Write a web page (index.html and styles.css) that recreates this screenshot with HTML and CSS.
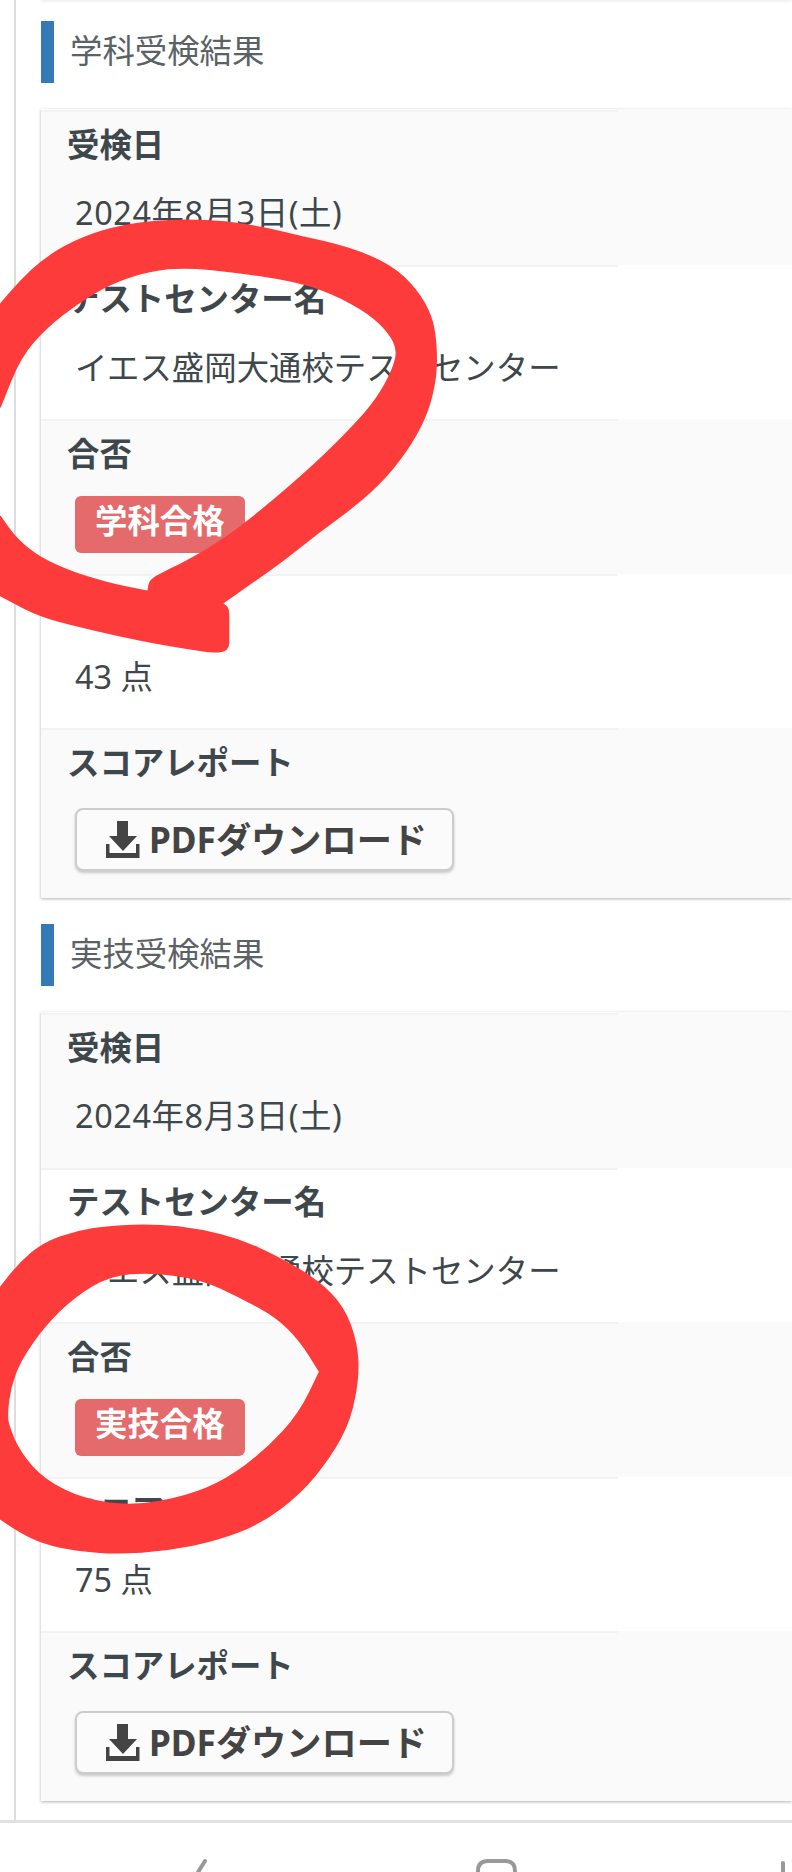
FILE: index.html
```html
<!DOCTYPE html>
<html lang="ja">
<head>
<meta charset="utf-8">
<title>受検結果</title>
<link rel="stylesheet" href="styles.css">
</head>
<body>
<div class="main">
  <div class="prevCard"></div>

  <h3 class="heading">学科受検結果</h3>
  <div class="card">
    <div class="row">
      <div class="label">受検日</div>
      <div class="value date">2024年8月3日(土)</div>
    </div>
    <div class="row">
      <div class="label">テストセンター名</div>
      <div class="value">イエス盛岡大通校テストセンター</div>
    </div>
    <div class="row">
      <div class="label">合否</div>
      <div class="value valueBadge"><span class="badge">学科合格</span></div>
    </div>
    <div class="row">
      <div class="label">スコア</div>
      <div class="value">43 点</div>
    </div>
    <div class="row">
      <div class="label">スコアレポート</div>
      <div class="value valueButton">
        <a href="#" class="pdfButton">
          <svg class="dlIcon" viewBox="0 0 34 37"><path d="M11 0H22V15H31L17 30L3 15H11Z"/><path d="M0 23H3.5V32H30V23H33.5V37H0Z"/></svg>
          PDFダウンロード
        </a>
      </div>
    </div>
  </div>

  <h3 class="heading">実技受検結果</h3>
  <div class="card">
    <div class="row">
      <div class="label">受検日</div>
      <div class="value date">2024年8月3日(土)</div>
    </div>
    <div class="row">
      <div class="label">テストセンター名</div>
      <div class="value">イエス盛岡大通校テストセンター</div>
    </div>
    <div class="row">
      <div class="label">合否</div>
      <div class="value valueBadge"><span class="badge">実技合格</span></div>
    </div>
    <div class="row">
      <div class="label">スコア</div>
      <div class="value">75 点</div>
    </div>
    <div class="row">
      <div class="label">スコアレポート</div>
      <div class="value valueButton">
        <a href="#" class="pdfButton">
          <svg class="dlIcon" viewBox="0 0 34 37"><path d="M11 0H22V15H31L17 30L3 15H11Z"/><path d="M0 23H3.5V32H30V23H33.5V37H0Z"/></svg>
          PDFダウンロード
        </a>
      </div>
    </div>
  </div>
</div>

<div class="navBar">
  <svg class="navIcons" viewBox="0 0 792 49">
    <path d="M205 38L190 62"/>
    <path d="M478 62V48Q478 38 488 38H505Q515 38 515 48V62"/>
    <path d="M783 40V62"/>
  </svg>
</div>

<!-- hand drawn red circles on top of the screenshot -->
<svg class="scribble scribbleOne" viewBox="0 0 1350 1350">
  <path d="M0 285L30 250Q60 215 95 182Q130 150 175 122Q220 95 275 75Q330 55 390 45Q450 35 525 32Q600 30 675 37Q750 45 825 62Q900 80 975 97Q1050 115 1110 140Q1170 165 1210 202Q1250 240 1272 280Q1295 320 1301 360Q1308 400 1308 450Q1308 500 1296 550Q1285 600 1260 650Q1235 700 1197 750Q1160 800 1110 845Q1060 890 1005 930Q950 970 900 1010Q850 1050 805 1082L665 1180L680 1192Q685 1200 685 1215L685 1300Q683 1322 660 1324Q640 1326 600 1320Q500 1305 425 1290Q350 1275 275 1257Q200 1240 150 1225Q100 1210 50 1182L0 1155L0 920L25 955Q50 990 85 1017Q120 1045 170 1067Q220 1090 280 1107Q340 1125 392 1135L445 1145L448 1125Q452 1110 470 1100L515 1077Q560 1055 620 1020Q680 985 740 937Q800 890 875 825Q950 760 1005 705Q1060 650 1095 610Q1130 570 1155 525Q1180 480 1187 450Q1195 420 1182 395Q1170 370 1140 340Q1110 310 1055 280Q1000 250 940 230Q880 210 790 197Q700 185 630 177Q560 170 505 175Q450 180 390 200Q330 220 280 250Q230 280 185 315Q140 350 100 395Q60 440 30 515L0 590Z"/>
</svg>
<svg class="scribble scribbleTwo" viewBox="0 0 1500 1200">
  <path fill-rule="evenodd" d="M0 265L30 227Q60 190 95 160Q130 130 180 112Q230 95 280 87Q330 80 400 77Q470 75 535 82Q600 90 660 105Q720 120 775 145Q830 170 890 205Q950 240 990 280Q1030 320 1050 375Q1070 430 1072 480Q1075 530 1062 595Q1050 660 1020 715Q990 770 945 825Q900 880 840 925Q780 970 715 995Q650 1020 575 1035Q500 1050 425 1055Q350 1060 290 1055Q230 1050 180 1040Q130 1030 90 1010Q50 990 0 955ZM390 220Q450 215 525 225Q600 235 660 262Q720 290 775 320Q830 350 865 385Q900 420 930 467L960 515L930 577Q900 640 850 695Q800 750 740 795Q680 840 620 865Q560 890 480 905Q400 920 325 910Q250 900 190 870Q130 840 95 800Q60 760 42 720Q25 680 22 660Q20 640 25 600Q30 560 45 520Q60 480 95 430Q130 380 175 335Q220 290 275 257Q330 225 390 220Z"/>
</svg>
</body>
</html>
```

FILE: styles.css
```css
html, body { margin: 0; padding: 0; background: #fff; }
body { position: relative; height: 1872px; overflow: hidden; font-family: "Noto Sans", "Noto Sans CJK JP", sans-serif; font-size: 32.4px; color: #3e474b; }

.main { height: 1820px; margin-left: 14px; padding-left: 25px; border-left: 2px solid #ddd; overflow: hidden; }
.prevCard { height: 1px; margin-top: -1px; box-shadow: 0 1px 3px rgba(0,0,0,.18); }

.heading { height: 62px; margin: 26px 0 26px; padding-left: 16px; border-left: 13px solid #337ab7; font-size: 32.4px; font-weight: 400; line-height: 59px; color: #5a6266; }
.main > .prevCard + .heading { margin-top: 21px; }

.card { padding-top: 1px; background: #fafafa; box-shadow: 0 1px 3px rgba(0,0,0,.3); }
.row { height: 154.5px; box-sizing: border-box; }
.row:nth-child(even) { background: #fff; }
.row:last-child { height: 170px; }

.label { width: 577px; box-sizing: border-box; padding: 8.5px 0 0 26px; border-top: 2px solid #f3f3f3; font-weight: 700; line-height: 46px; }
.value { padding: 22.5px 0 0 34px; line-height: 46px; }
.date { letter-spacing: .6px; }
.valueBadge { padding-top: 20px; }
.valueButton { padding-top: 23px; }

.badge { display: inline-block; height: 57px; padding: 0 20px; border-radius: 6px; background: #e46a6c; color: #fff; font-weight: 700; line-height: 48px; }

.pdfButton { display: inline-flex; align-items: center; gap: 9px; width: 379px; height: 63px; box-sizing: border-box; padding-left: 29px; border: 2px solid #ccc; border-radius: 8px; background: #fbfbfb; box-shadow: 0 2px 3px rgba(0,0,0,.2); color: #444; font-size: 35.2px; font-weight: 700; text-decoration: none; white-space: nowrap; }
.dlIcon { width: 34px; height: 37px; fill: #444; flex: none; }

.navBar { height: 49px; border-top: 3px solid #e0e0e0; }
.navIcons { display: block; width: 792px; height: 49px; fill: none; stroke: #999; stroke-width: 4; stroke-linecap: round; }

.scribble { position: absolute; left: 0; fill: #fe3b3b; stroke: #fe3b3b; stroke-width: 6; stroke-linejoin: round; }
.scribbleOne { top: 210px; width: 450px; height: 450px; }
.scribbleTwo { top: 1200px; width: 500px; height: 400px; }
```
